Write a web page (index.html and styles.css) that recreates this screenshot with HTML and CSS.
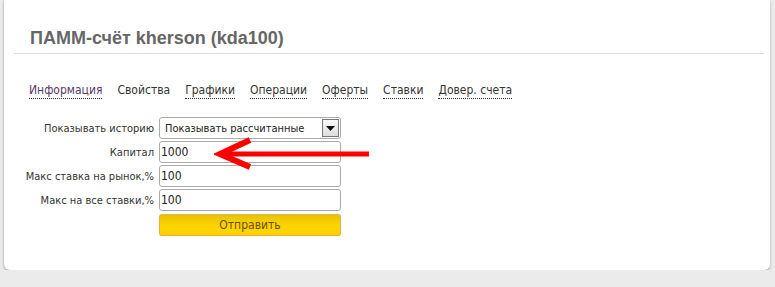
FILE: index.html
```html
<!DOCTYPE html>
<html lang="ru">
  <head>
    <meta charset="UTF-8" />
    <title>ПАММ-счёт kherson (kda100)</title>
    <link rel="stylesheet" href="styles.css">
  </head>
  <body>
    <div class="panel">
      <div class="head">
        <h1>ПАММ-счёт kherson (kda100)</h1>
      </div>
      <div class="tabs">
        <a class="visited" href="#">Информация</a>
        <span class="current">Свойства</span>
        <a href="#">Графики</a>
        <a href="#">Операции</a>
        <a href="#">Оферты</a>
        <a href="#">Ставки</a>
        <a href="#">Довер. счета</a>
      </div>
      <form class="settings">
        <label>Показывать историю</label>
        <div class="select">
          <span>Показывать рассчитанные</span>
          <span class="drop"><svg width="9" height="5" viewBox="0 0 9 5"><path d="M0 0h9L4.5 5z" fill="#111"/></svg></span>
        </div>
        <label>Капитал</label>
        <div class="field"><input type="text" value="1000" /></div>
        <label>Макс ставка на рынок,%</label>
        <div class="field"><input type="text" value="100" /></div>
        <label>Макс на все ставки,%</label>
        <div class="field"><input type="text" value="100" /></div>
        <span></span>
        <button type="button">Отправить</button>
        <!-- стрелка поверх формы -->
        <svg class="arrow" width="160" height="34" viewBox="0 0 160 34">
          <path d="M155 17H12" stroke="#f00" stroke-width="5" fill="none"/>
          <path d="M36 3L6 17L36 30" stroke="#f00" stroke-width="6" fill="none" stroke-linejoin="miter"/>
        </svg>
      </form>
    </div>
  </body>
</html>
```

FILE: styles.css
```css
body {
  margin: 0;
  background-color: #ebebeb;
  font-family: "DejaVu Sans Condensed", "DejaVu Sans", Tahoma, sans-serif;
}
.panel {
  position: relative;
  height: 270px;
  margin: 0 5px 0 4px;
  background: #fff;
  border-radius: 0 0 6px 6px;
  box-shadow: 0 2px 3px rgba(0, 0, 0, 0.25), -1px 0 2px rgba(0, 0, 0, 0.06);
}
.head {
  margin: 0 6px 0 10px;
  padding: 28px 0 4px 16px;
  border-bottom: 1px solid #dcdcdc;
}
h1 {
  margin: 0;
  font-family: "Liberation Sans", Arial, sans-serif;
  font-size: 18px;
  font-weight: bold;
  color: #666;
}
.tabs {
  display: flex;
  gap: 15px;
  padding: 29px 0 0 25px;
  font-size: 12px;
}
.tabs a,
.tabs span {
  color: #333;
  text-decoration: none;
  padding-bottom: 1px;
  border-bottom: 1px dotted #333;
}
.tabs a.visited {
  color: #553a66;
}
.tabs .current {
  border-bottom-color: transparent;
}
.settings {
  position: relative;
  display: grid;
  grid-template-columns: 150px 182px;
  column-gap: 5px;
  row-gap: 2px;
  margin: 18px 0 0 0;
  font-size: 11px;
  color: #333;
}
.settings label {
  text-align: right;
  align-self: center;
}
.select,
.field input {
  box-sizing: border-box;
  height: 22px;
  border: 1px solid #aaa;
  border-radius: 3px;
  background: #fff;
}
.select {
  display: flex;
  align-items: center;
  justify-content: space-between;
  padding: 0 0 0 5px;
  font-size: 11px;
  color: #222;
}
.drop {
  display: flex;
  align-items: center;
  justify-content: center;
  box-sizing: border-box;
  width: 17px;
  height: 18px;
  margin-right: 1px;
  border: 1px solid #777;
  background: linear-gradient(#fafafa, #ddd);
}
.field input {
  width: 100%;
  padding: 0 1px;
  font-family: "DejaVu Sans Condensed", "DejaVu Sans", Tahoma, sans-serif;
  font-size: 12px;
  color: #222;
}
button {
  box-sizing: border-box;
  height: 22px;
  margin-top: 1px;
  border: 1px solid #d8b64a;
  border-bottom-color: #f0a830;
  border-radius: 3px;
  background: linear-gradient(#e9c100, #fdd500 55%, #ffd200);
  color: #6b4d10;
  font-family: "DejaVu Sans Condensed", "DejaVu Sans", Tahoma, sans-serif;
  font-size: 12px;
  cursor: pointer;
}
.arrow {
  position: absolute;
  left: 210px;
  top: 20px;
}
```
